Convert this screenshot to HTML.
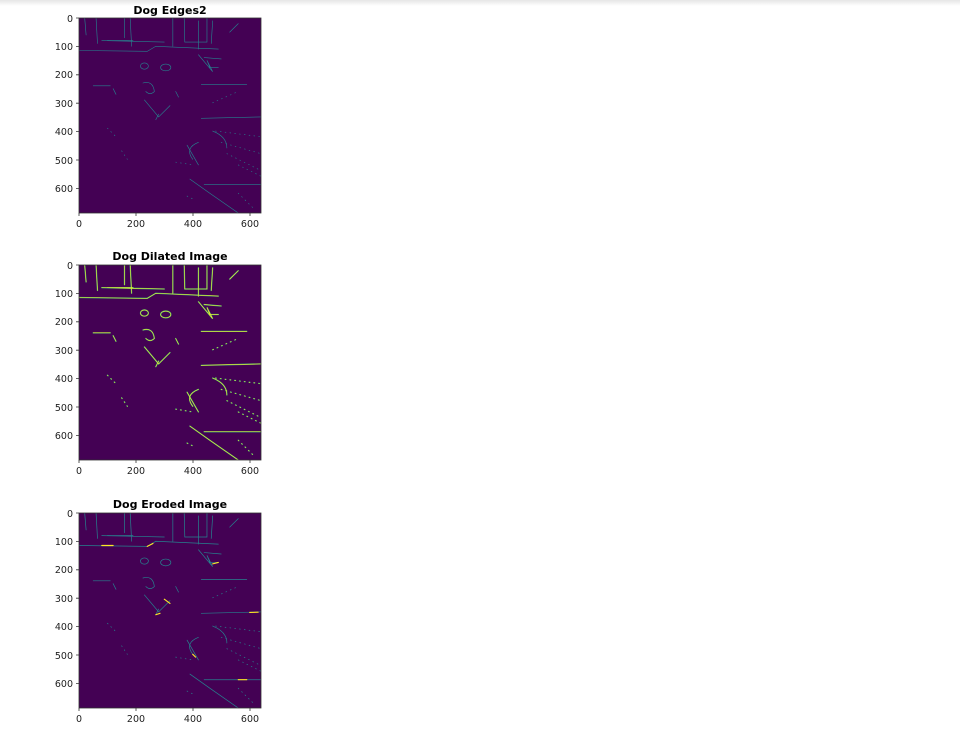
<!DOCTYPE html>
<html><head><meta charset="utf-8"><style>
body{margin:0;background:#fff;width:960px;height:730px;overflow:hidden;position:relative;font-family:"DejaVu Sans",sans-serif}
.shade{position:absolute;left:0;top:0;width:960px;height:6px;background:linear-gradient(#e6e6e6,#fff)}
</style></head><body>
<div class="shade"></div>
<svg width="960" height="730" style="position:absolute;left:0;top:0" font-family="DejaVu Sans, sans-serif">
<defs>
<g id="edges" fill="none" stroke-linecap="round">
<path d="M0 115 L240 118 L270 100 L490 110 M20 0 L25 60 M60 0 L65 90 M180 0 L185 100 M330 0 L330 100 M370 0 L372 85 L450 85 L450 0 M470 10 L465 90 M560 20 L530 50 M80 80 L300 85 M100 80 L190 80 M420 130 L470 190 L450 150 L460 175 L490 175 M440 140 L500 145 M50 240 L110 240 M430 235 L590 235 M430 355 L640 350 M390 570 L460 620 L560 690 M440 590 L640 590 M230 290 L280 350 L320 310 M270 360 L280 340 M160 0 L160 70 M420 10 L420 110 M120 250 L130 270 M340 260 L350 280"/>
<ellipse cx="230" cy="170" rx="14" ry="11"/>
<ellipse cx="305" cy="175" rx="18" ry="12"/>
<path d="M225 230 Q260 220 265 260 Q250 275 235 260"/>
<path d="M400 500 Q370 460 420 440 M380 450 L420 520 M470 400 Q520 420 520 460"/>
<g stroke-dasharray="3 14">
<path d="M480 400 L640 420 M500 440 L640 480 M520 480 L640 540 M560 520 L640 560 M100 390 L130 420 M340 510 L400 520 M470 300 L560 260 M150 470 L170 500 M380 630 L400 640 M560 620 L620 680"/>
</g>
</g>
<g id="hl" fill="none" stroke-linecap="round">
<path d="M80 115 L120 115 M240 118 L260 108 M300 305 L320 320 M270 360 L285 355 M470 180 L490 175 M560 590 L590 590 M600 352 L630 351 M400 500 L410 510"/>
</g>
</defs>
<g>
<text x="170" y="14" text-anchor="middle" font-size="11" font-weight="bold">Dog Edges2</text>
<rect x="79" y="18" width="182" height="195" fill="#440154"/>
<svg x="79" y="18" width="182" height="195" viewBox="0 0 640 690" preserveAspectRatio="none"><use href="#edges" stroke="#26828e" stroke-width="2.2"/></svg>
<rect x="79" y="18" width="182" height="195" fill="none" stroke="#333" stroke-width="0.8"/>
</g>
<g transform="translate(0,248)">
<text x="170" y="12" text-anchor="middle" font-size="11" font-weight="bold">Dog Dilated Image</text>
<rect x="79" y="17" width="182" height="195" fill="#440154"/>
<svg x="79" y="17" width="182" height="195" viewBox="0 0 640 690" preserveAspectRatio="none"><use href="#edges" stroke="#35b779" stroke-width="4.5"/><use href="#edges" stroke="#fde725" stroke-width="2"/></svg>
<rect x="79" y="17" width="182" height="195" fill="none" stroke="#333" stroke-width="0.8"/>
</g>
<g transform="translate(0,496)">
<text x="170" y="12" text-anchor="middle" font-size="11" font-weight="bold">Dog Eroded Image</text>
<rect x="79" y="17" width="182" height="195" fill="#440154"/>
<svg x="79" y="17" width="182" height="195" viewBox="0 0 640 690" preserveAspectRatio="none"><use href="#edges" stroke="#26828e" stroke-width="2.5"/><use href="#hl" stroke="#fde725" stroke-width="4"/></svg>
<rect x="79" y="17" width="182" height="195" fill="none" stroke="#333" stroke-width="0.8"/>
</g>
<g font-size="9.5" fill="#222" stroke="none">
<g id="ax1">
<text x="73" y="22" text-anchor="end">0</text><text x="73" y="50" text-anchor="end">100</text><text x="73" y="78" text-anchor="end">200</text><text x="73" y="107" text-anchor="end">300</text><text x="73" y="135" text-anchor="end">400</text><text x="73" y="164" text-anchor="end">500</text><text x="73" y="192" text-anchor="end">600</text>
<text x="79" y="227" text-anchor="middle">0</text><text x="136" y="227" text-anchor="middle">200</text><text x="193" y="227" text-anchor="middle">400</text><text x="250" y="227" text-anchor="middle">600</text>
<path d="M76 18h3M76 46.4h3M76 74.8h3M76 103.2h3M76 131.6h3M76 160h3M76 188.4h3M79 213v3M136 213v3M193 213v3M250 213v3" stroke="#333" stroke-width="0.8"/>
</g>
<use href="#ax1" y="247"/>
<use href="#ax1" y="495"/>
</g>
</svg>
</body></html>
